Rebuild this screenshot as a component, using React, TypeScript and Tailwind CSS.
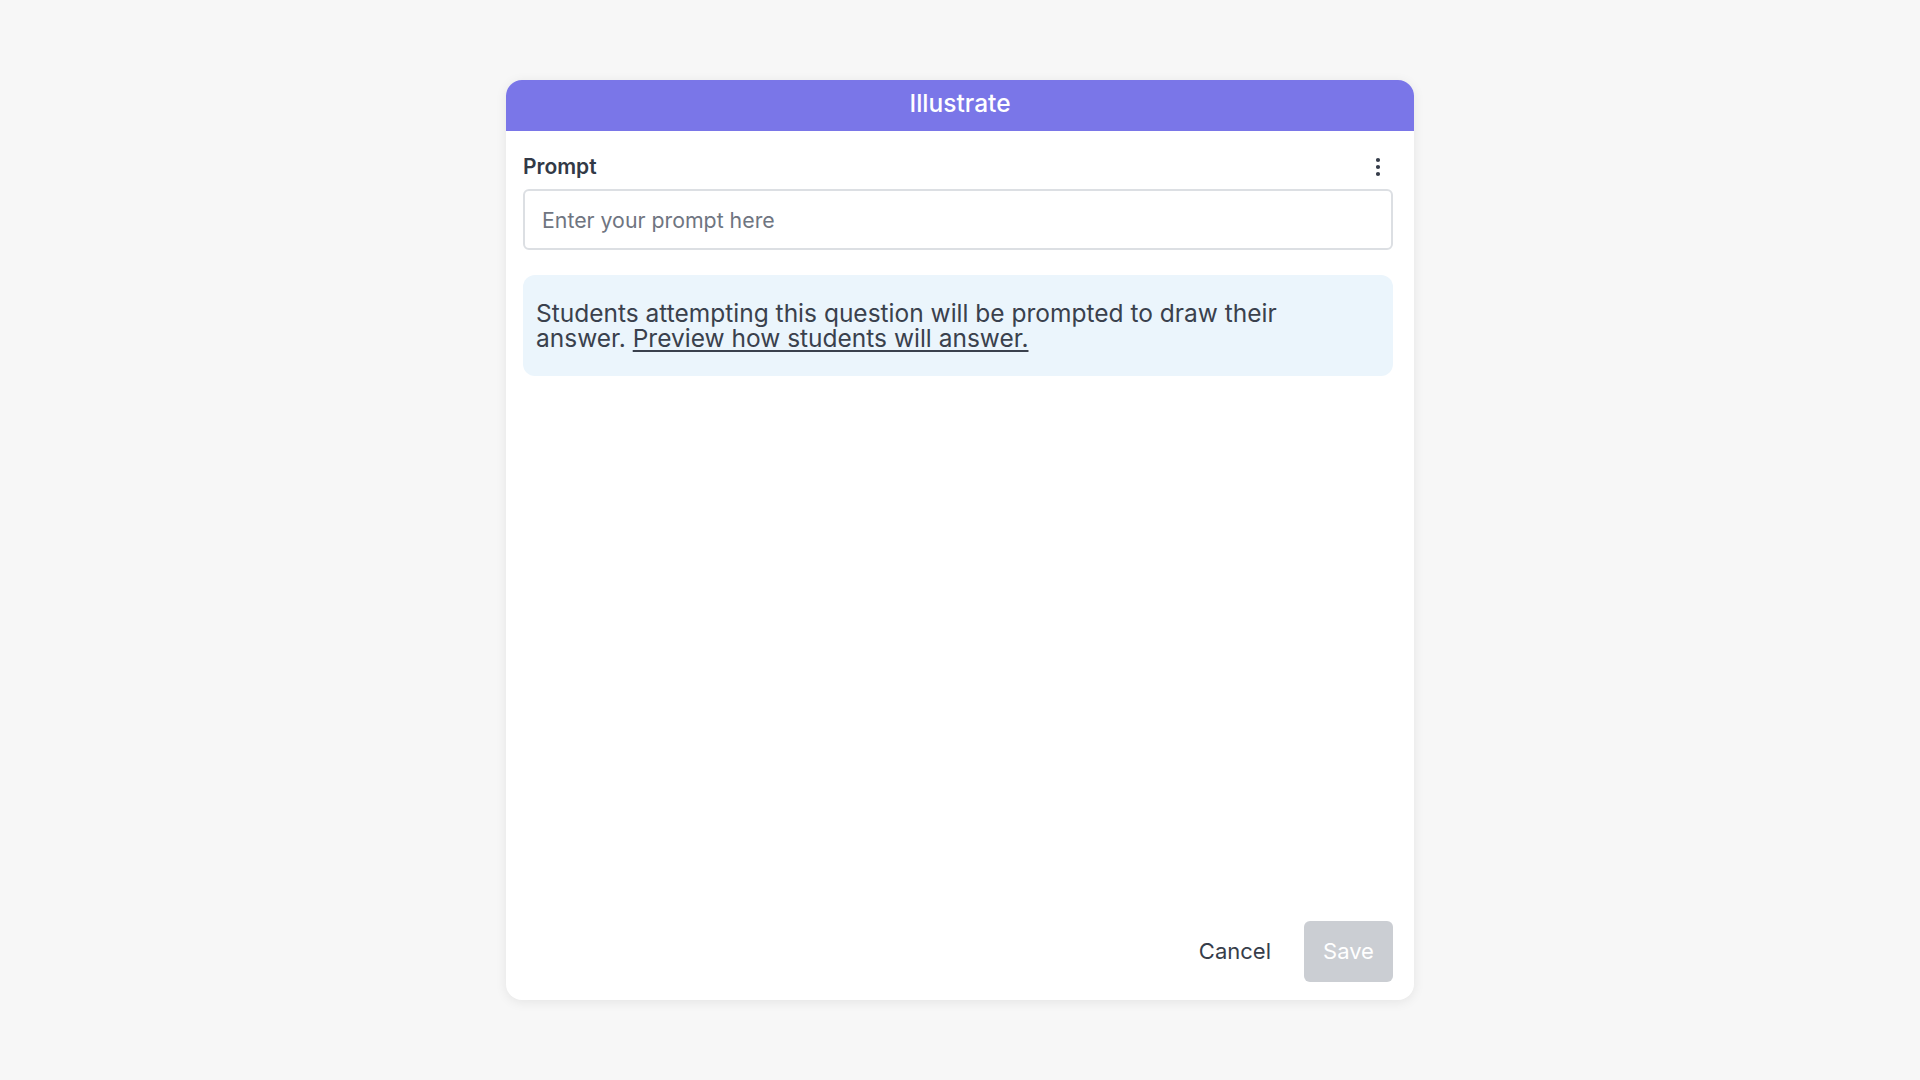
import { EllipsisVertical } from 'lucide-react';

export default function App() {
  return (
    <div className="flex min-h-screen items-center justify-center bg-[#f7f7f7] font-['Inter',sans-serif]">
      <div className="flex h-[920px] w-[908px] flex-col overflow-hidden rounded-2xl bg-white shadow-[0_2px_12px_rgba(0,0,0,0.08)]">
        <div className="flex h-[51px] shrink-0 items-center justify-center bg-[#7a76e8] pb-[5px]">
          <h1 className="text-[24.5px] font-medium text-white">Illustrate</h1>
        </div>

        <div className="flex flex-1 flex-col pl-[17px] pr-[21px] pt-[22px] pb-[18px]">
          <div className="flex items-center justify-between">
            <label className="text-[21px] leading-[28px] font-semibold text-[#323946]">Prompt</label>
            <button className="mr-[3px] text-[#363d4a]">
              <EllipsisVertical className="h-6 w-6" strokeWidth={2.2} />
            </button>
          </div>

          <input
            type="text"
            placeholder="Enter your prompt here"
            className="mt-[8px] h-[61px] w-full rounded-md border-2 border-[#dcdfe3] px-[17px] text-[21.3px] text-gray-800 placeholder:text-[#6f7581] outline-none"
          />

          <div className="mt-[25px] rounded-xl bg-[#ebf5fc] px-[13px] pt-[26px] pb-[25px]">
            <p className="max-w-[780px] text-[24.5px] leading-[25px] text-[#3a414d]">
              Students attempting this question will be prompted to draw their answer.{' '}
              <a href="#" className="underline underline-offset-[3px]">
                Preview how students will answer.
              </a>
            </p>
          </div>

          <div className="mt-auto flex items-center justify-end gap-[14px]">
            <button className="h-[61px] px-[19px] text-[22px] text-[#363d4a]">Cancel</button>
            <button disabled className="h-[61px] w-[89px] rounded-md bg-[#cbced3] text-[22px] text-white">
              Save
            </button>
          </div>
        </div>
      </div>
    </div>
  );
}
